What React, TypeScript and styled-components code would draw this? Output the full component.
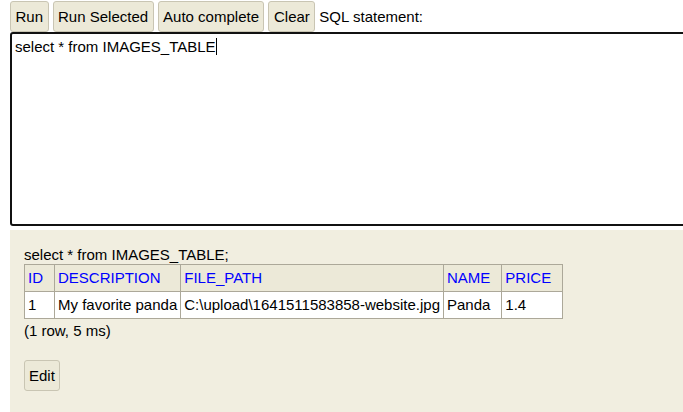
import React from "react";
import styled, { createGlobalStyle } from "styled-components";

const Global = createGlobalStyle`
  html, body { margin: 0; padding: 0; background: #ffffff; overflow: hidden; }
  body { font-family: "Liberation Sans", Arial, sans-serif; font-size: 15px; color: #000; }
`;

const Page = styled.div`
  display: flex;
  flex-direction: column;
  padding-left: 10px;
  width: 673px;
  height: 412px;
  overflow: hidden;
`;

const Toolbar = styled.div`
  display: flex;
  align-items: center;
  gap: 4px;
  padding-top: 1px;
  height: 31px;
  flex: none;
`;

const Button = styled.button`
  font-family: "Liberation Sans", Arial, sans-serif;
  font-size: 15px;
  line-height: 17px;
  color: #000;
  background: #ece9d8;
  border: 1px solid #c9c5b3;
  border-radius: 3px;
  padding: 6px 4.5px;
  height: 31px;
  margin: 0;
  cursor: pointer;
`;

const Label = styled.span`
  font-size: 15px;
  line-height: 17px;
`;

const Editor = styled.div`
  box-sizing: border-box;
  flex: none;
  height: 194px;
  width: 690px;
  border: 2px solid #111;
  border-radius: 3px;
  padding: 4px 3px;
  font-size: 15px;
  line-height: 17px;
  background: #fff;
  white-space: pre;
`;

const Caret = styled.span`
  display: inline-block;
  width: 1px;
  height: 17px;
  background: #000;
  vertical-align: top;
`;

const Result = styled.div`
  margin-top: 4px;
  flex: 1;
  background: #f1eee0;
  padding: 16px 14px 0 14px;
  display: flex;
  flex-direction: column;
  align-items: flex-start;
`;

const Line = styled.div`
  font-size: 15px;
  line-height: 17px;
`;

const Table = styled.table`
  border-collapse: collapse;
  margin-top: 1px;
  margin-bottom: 3px;
  background: #fff;
`;

const Th = styled.th`
  background: #ece9d8;
  border: 1px solid #aca899;
  color: #0000ff;
  font-weight: normal;
  text-align: left;
  font-size: 15px;
  line-height: 18px;
  padding: 4px 11px 4px 3px;
  white-space: nowrap;
`;

const Td = styled.td`
  border: 1px solid #aca899;
  font-size: 15px;
  line-height: 18px;
  padding: 4px 3px;
  white-space: nowrap;
`;

const EditButton = styled(Button)`
  height: 31px;
  margin-top: 21px;
  padding: 6px 4px;
`;

const columns = ["ID", "DESCRIPTION", "FILE_PATH", "NAME", "PRICE"];
const rows = [["1", "My favorite panda", "C:\\upload\\1641511583858-website.jpg", "Panda", "1.4"]];

export default function App() {
  return (
    <>
      <Global />
      <Page>
        <Toolbar>
          <Button>Run</Button>
          <Button>Run Selected</Button>
          <Button>Auto complete</Button>
          <Button>Clear</Button>
          <Label>SQL statement:</Label>
        </Toolbar>
        <Editor>
          select * from IMAGES_TABLE<Caret />
        </Editor>
        <Result>
          <Line>select * from IMAGES_TABLE;</Line>
          <Table>
            <thead>
              <tr>
                {columns.map((c) => (
                  <Th key={c}>{c}</Th>
                ))}
              </tr>
            </thead>
            <tbody>
              {rows.map((r, i) => (
                <tr key={i}>
                  {r.map((v, j) => (
                    <Td key={j}>{v}</Td>
                  ))}
                </tr>
              ))}
            </tbody>
          </Table>
          <Line>(1 row, 5 ms)</Line>
          <EditButton>Edit</EditButton>
        </Result>
      </Page>
    </>
  );
}
